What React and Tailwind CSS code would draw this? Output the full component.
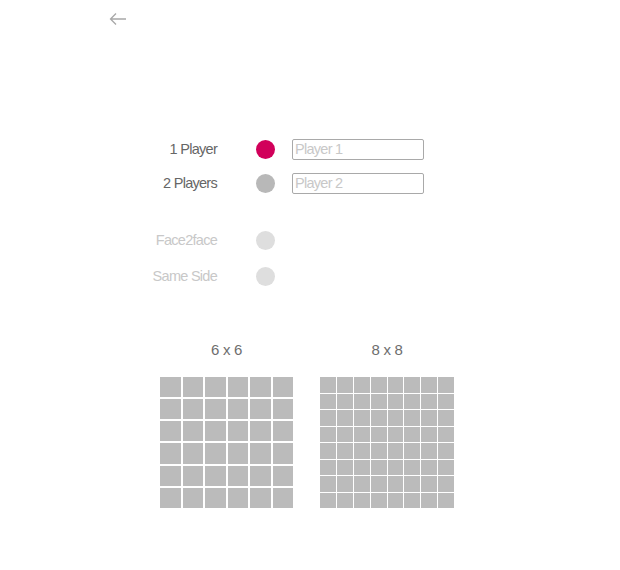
const font = { fontFamily: '"Liberation Sans", Arial, sans-serif' };

function Board({ label, n, width }) {
  const cells = Array.from({ length: n * n });
  return (
    <div className="flex flex-col items-center">
      <div className="text-[15px] tracking-[-0.02em] text-[#6e6e6e] h-[20px] leading-[20px]">{label}</div>
      <div
        className={`mt-[17px] grid h-[131px] ${width} ${n === 6 ? "grid-cols-6 grid-rows-6 gap-[2px]" : "grid-cols-8 grid-rows-8 gap-px"}`}
      >
        {cells.map((_, i) => (
          <div key={i} className="bg-[#bbbbbb]" />
        ))}
      </div>
    </div>
  );
}

function Row({ label, dot, muted, placeholder }) {
  return (
    <div className="flex items-center h-[21px]">
      <span
        className={`w-[80px] text-right text-[14.5px] tracking-[-0.05em] ${muted ? "text-[#c8c8c8]" : "text-[#666]"}`}
      >
        {label}
      </span>
      <span className={`ml-[39px] w-[19px] h-[19px] rounded-full ${dot}`} />
      {placeholder && (
        <input
          className="ml-[17px] w-[132px] h-[21px] border border-[#a9a9a9] rounded-[2px] px-[2px] text-[14.5px] tracking-[-0.05em] placeholder:text-[#c8c8c8] outline-none"
          style={font}
          placeholder={placeholder}
        />
      )}
    </div>
  );
}

export default function App() {
  return (
    <div className="w-[620px] h-[570px] bg-white" style={font}>
      <div className="pt-[12px] pl-[109px]">
        <svg width="18" height="14" viewBox="0 0 18 14" fill="none" stroke="#a8a8a8" strokeWidth="1.3">
          <path d="M17 7H1.5M7 1.5L1.5 7L7 12.5" />
        </svg>
      </div>

      <div className="mt-[113px] pl-[137px] flex flex-col gap-[13px]">
        <Row label="1 Player" dot="bg-[#d1005a]" placeholder="Player 1" />
        <Row label="2 Players" dot="bg-[#b8b8b8]" placeholder="Player 2" />
      </div>

      <div className="mt-[36px] pl-[137px] flex flex-col gap-[15px]">
        <Row label="Face2face" dot="bg-[#dedede]" muted />
        <Row label="Same Side" dot="bg-[#dedede]" muted />
      </div>

      <div className="mt-[53px] pl-[160px] flex gap-[27px]">
        <Board label="6 x 6" n={6} width="w-[133px]" />
        <Board label="8 x 8" n={8} width="w-[134px]" />
      </div>
    </div>
  );
}
